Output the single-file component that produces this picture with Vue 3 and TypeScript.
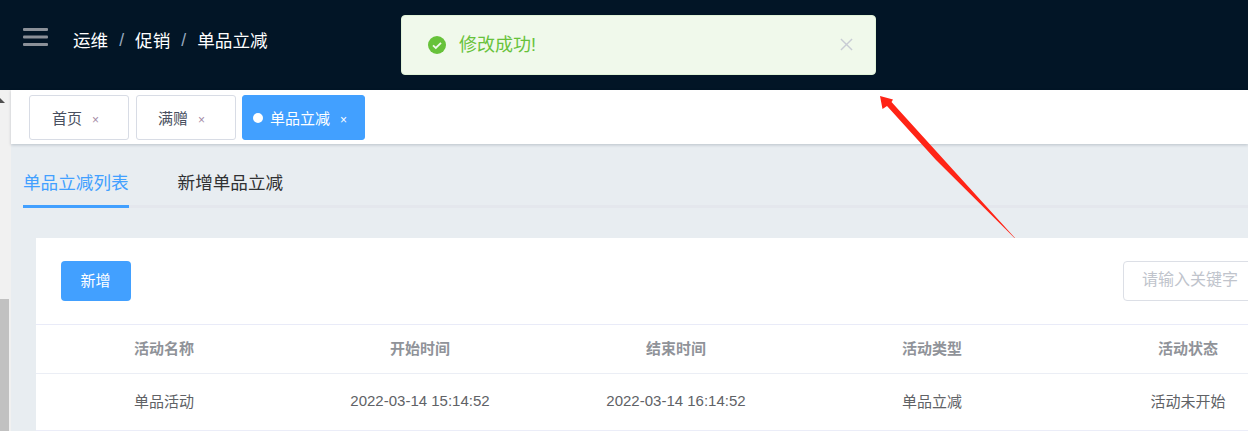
<script setup lang="ts">
const headers = ["活动名称", "开始时间", "结束时间", "活动类型", "活动状态"];
const row = ["单品活动", "2022-03-14 15:14:52", "2022-03-14 16:14:52", "单品立减", "活动未开始"];
</script>

<template>
  <div class="page">
    <header class="navbar">
      <svg class="hamburger" width="26" height="20" viewBox="0 0 26 20">
        <rect x="0" y="1" width="25" height="3" rx="1" fill="#8b9098" />
        <rect x="0" y="8.5" width="25" height="3" rx="1" fill="#8b9098" />
        <rect x="0" y="16" width="25" height="3" rx="1" fill="#8b9098" />
      </svg>
      <nav class="crumbs">
        <span>运维</span><i>/</i><span>促销</span><i>/</i><span>单品立减</span>
      </nav>
    </header>

    <div class="body">
      <aside class="scrollbar">
        <span class="arrow"></span>
        <span class="thumb"></span>
      </aside>
      <main class="main">
        <div class="tags">
          <div class="tag"><span>首页</span><em>×</em></div>
          <div class="tag"><span>满赠</span><em>×</em></div>
          <div class="tag active"><b></b><span>单品立减</span><em>×</em></div>
        </div>

        <div class="tabs">
          <div class="tab current">单品立减列表</div>
          <div class="tab">新增单品立减</div>
        </div>

        <section class="card">
          <div class="toolbar">
            <button class="add">新增</button>
            <div class="search">请输入关键字</div>
          </div>
          <div class="row head">
            <div v-for="h in headers" :key="h" class="cell">{{ h }}</div>
          </div>
          <div class="row">
            <div v-for="c in row" :key="c" class="cell">{{ c }}</div>
          </div>
        </section>
      </main>
    </div>

    <div class="message">
      <svg class="ok" width="18" height="18" viewBox="0 0 18 18">
        <circle cx="9" cy="9" r="9" fill="#67c23a" />
        <path d="M5 9.4l2.8 2.6L13 6.8" fill="none" stroke="#f0f9eb" stroke-width="1.8" />
      </svg>
      <span class="text">修改成功!</span>
      <svg class="close" width="14" height="14" viewBox="0 0 14 14">
        <path d="M1 1l12 12M13 1L1 13" stroke="#c8ccd4" stroke-width="1.5" fill="none" />
      </svg>
    </div>

    <svg class="pointer" width="150" height="160" viewBox="0 0 150 160">
      <polygon points="0,6 13,9.5 11.5,12 135,148 134.5,148 56,70 7,16 2.5,19" fill="#ff2416" />
    </svg>
  </div>
</template>

<style>
html,
body {
  margin: 0;
  overflow: hidden;
}
</style>

<style scoped>
.page {
  position: relative;
  width: 1248px;
  height: 431px;
  overflow: hidden;
  background: #e8edf1;
  font-family: "Liberation Sans", "Noto Sans CJK SC", sans-serif;
}

.navbar {
  display: flex;
  align-items: center;
  height: 90px;
  padding: 0 0 12px 23px;
  box-sizing: border-box;
  background: #021526;
}

.hamburger {
  margin-bottom: 4px;
}

.crumbs {
  display: flex;
  align-items: center;
  margin-left: 24px;
  color: #fff;
  font-size: 17.6px;
}

.crumbs i {
  margin: 2px 11px 0;
  color: #97a8be;
  font-style: normal;
}

.body {
  display: flex;
  height: 341px;
}

.scrollbar {
  position: relative;
  flex: none;
  width: 11px;
  background: #f1f1f1;
  overflow: hidden;
}

.arrow {
  position: absolute;
  top: 8px;
  left: -5px;
  border-left: 5px solid transparent;
  border-right: 5px solid transparent;
  border-bottom: 5px solid #505050;
}

.thumb {
  position: absolute;
  top: 209px;
  left: 0;
  width: 9px;
  height: 132px;
  background: #c1c1c1;
}

.main {
  flex: 1;
  min-width: 0;
}

.tags {
  display: flex;
  gap: 7px;
  height: 54px;
  padding: 5px 0 0 18px;
  box-sizing: border-box;
  background: #fff;
  box-shadow: 0 1px 3px rgba(0, 21, 41, 0.2);
  position: relative;
}

.tag {
  display: flex;
  align-items: center;
  width: 100px;
  height: 45px;
  padding-left: 22px;
  box-sizing: border-box;
  border: 1px solid #d8dce5;
  border-radius: 3px;
  color: #495060;
  font-size: 15px;
}

.tag + .tag {
  padding-left: 21px;
}

.tag em {
  margin: 5px 0 0 10px;
  color: #a58aa6;
  font-style: normal;
  font-size: 12px;
}

.tag.active {
  width: 123px;
  margin-left: -1px;
  padding-left: 10px;
  border-color: #42a0ff;
  background: #42a0ff;
  color: #fff;
}

.tag.active b {
  width: 10px;
  height: 10px;
  margin-right: 7px;
  border-radius: 50%;
  background: #fff;
}

.tag.active em {
  color: #fff;
}

.tabs {
  display: flex;
  height: 64px;
  margin-left: 12px;
  box-sizing: border-box;
  border-bottom: 3px solid #e4e7ed;
}

.tab {
  height: 64px;
  box-sizing: border-box;
  margin-right: 49px;
  padding-top: 26px;
  color: #303133;
  font-size: 17.6px;
  line-height: 26px;
}

.tab.current {
  border-bottom: 3px solid #42a0ff;
  color: #42a0ff;
}

.card {
  margin: 30px 0 0 25px;
  background: #fff;
  color: #606266;
  font-size: 15px;
}

.toolbar {
  display: flex;
  justify-content: space-between;
  height: 87px;
  padding: 23px 0 0 25px;
  box-sizing: border-box;
  border-bottom: 1px solid #e9ebf8;
}

.add {
  width: 70px;
  height: 40px;
  padding: 0 1px 3px 0;
  border: 0;
  border-radius: 4px;
  background: #42a0ff;
  color: #fff;
  font: inherit;
}

.search {
  width: 200px;
  height: 40px;
  margin-right: -75px;
  padding-left: 18px;
  box-sizing: border-box;
  border: 1px solid #dcdfe6;
  border-radius: 4px;
  color: #c0c4cc;
  font-size: 16px;
  line-height: 36px;
}

.row {
  display: grid;
  grid-template-columns: repeat(5, 256px);
  height: 57px;
  box-sizing: border-box;
  align-items: center;
  padding-bottom: 4px;
  border-bottom: 1px solid #ebedf8;
}

.row.head {
  height: 49px;
  border-bottom-color: #ebeef5;
  color: #909399;
  font-weight: 700;
}

.cell {
  text-align: center;
  white-space: nowrap;
}

.message {
  position: absolute;
  top: 15px;
  left: 401px;
  display: flex;
  align-items: center;
  width: 475px;
  height: 60px;
  padding: 0 22px 0 26px;
  box-sizing: border-box;
  border: 1px solid #e1f3d8;
  border-radius: 4px;
  background: #f0f9eb;
  color: #67c23a;
  font-size: 18px;
}

.text {
  flex: 1;
  margin: 0 0 5px 13px;
}

.close {
  width: 13px;
  height: 13px;
  margin-bottom: 1px;
}

.pointer {
  position: absolute;
  top: 90px;
  left: 880px;
}
</style>
